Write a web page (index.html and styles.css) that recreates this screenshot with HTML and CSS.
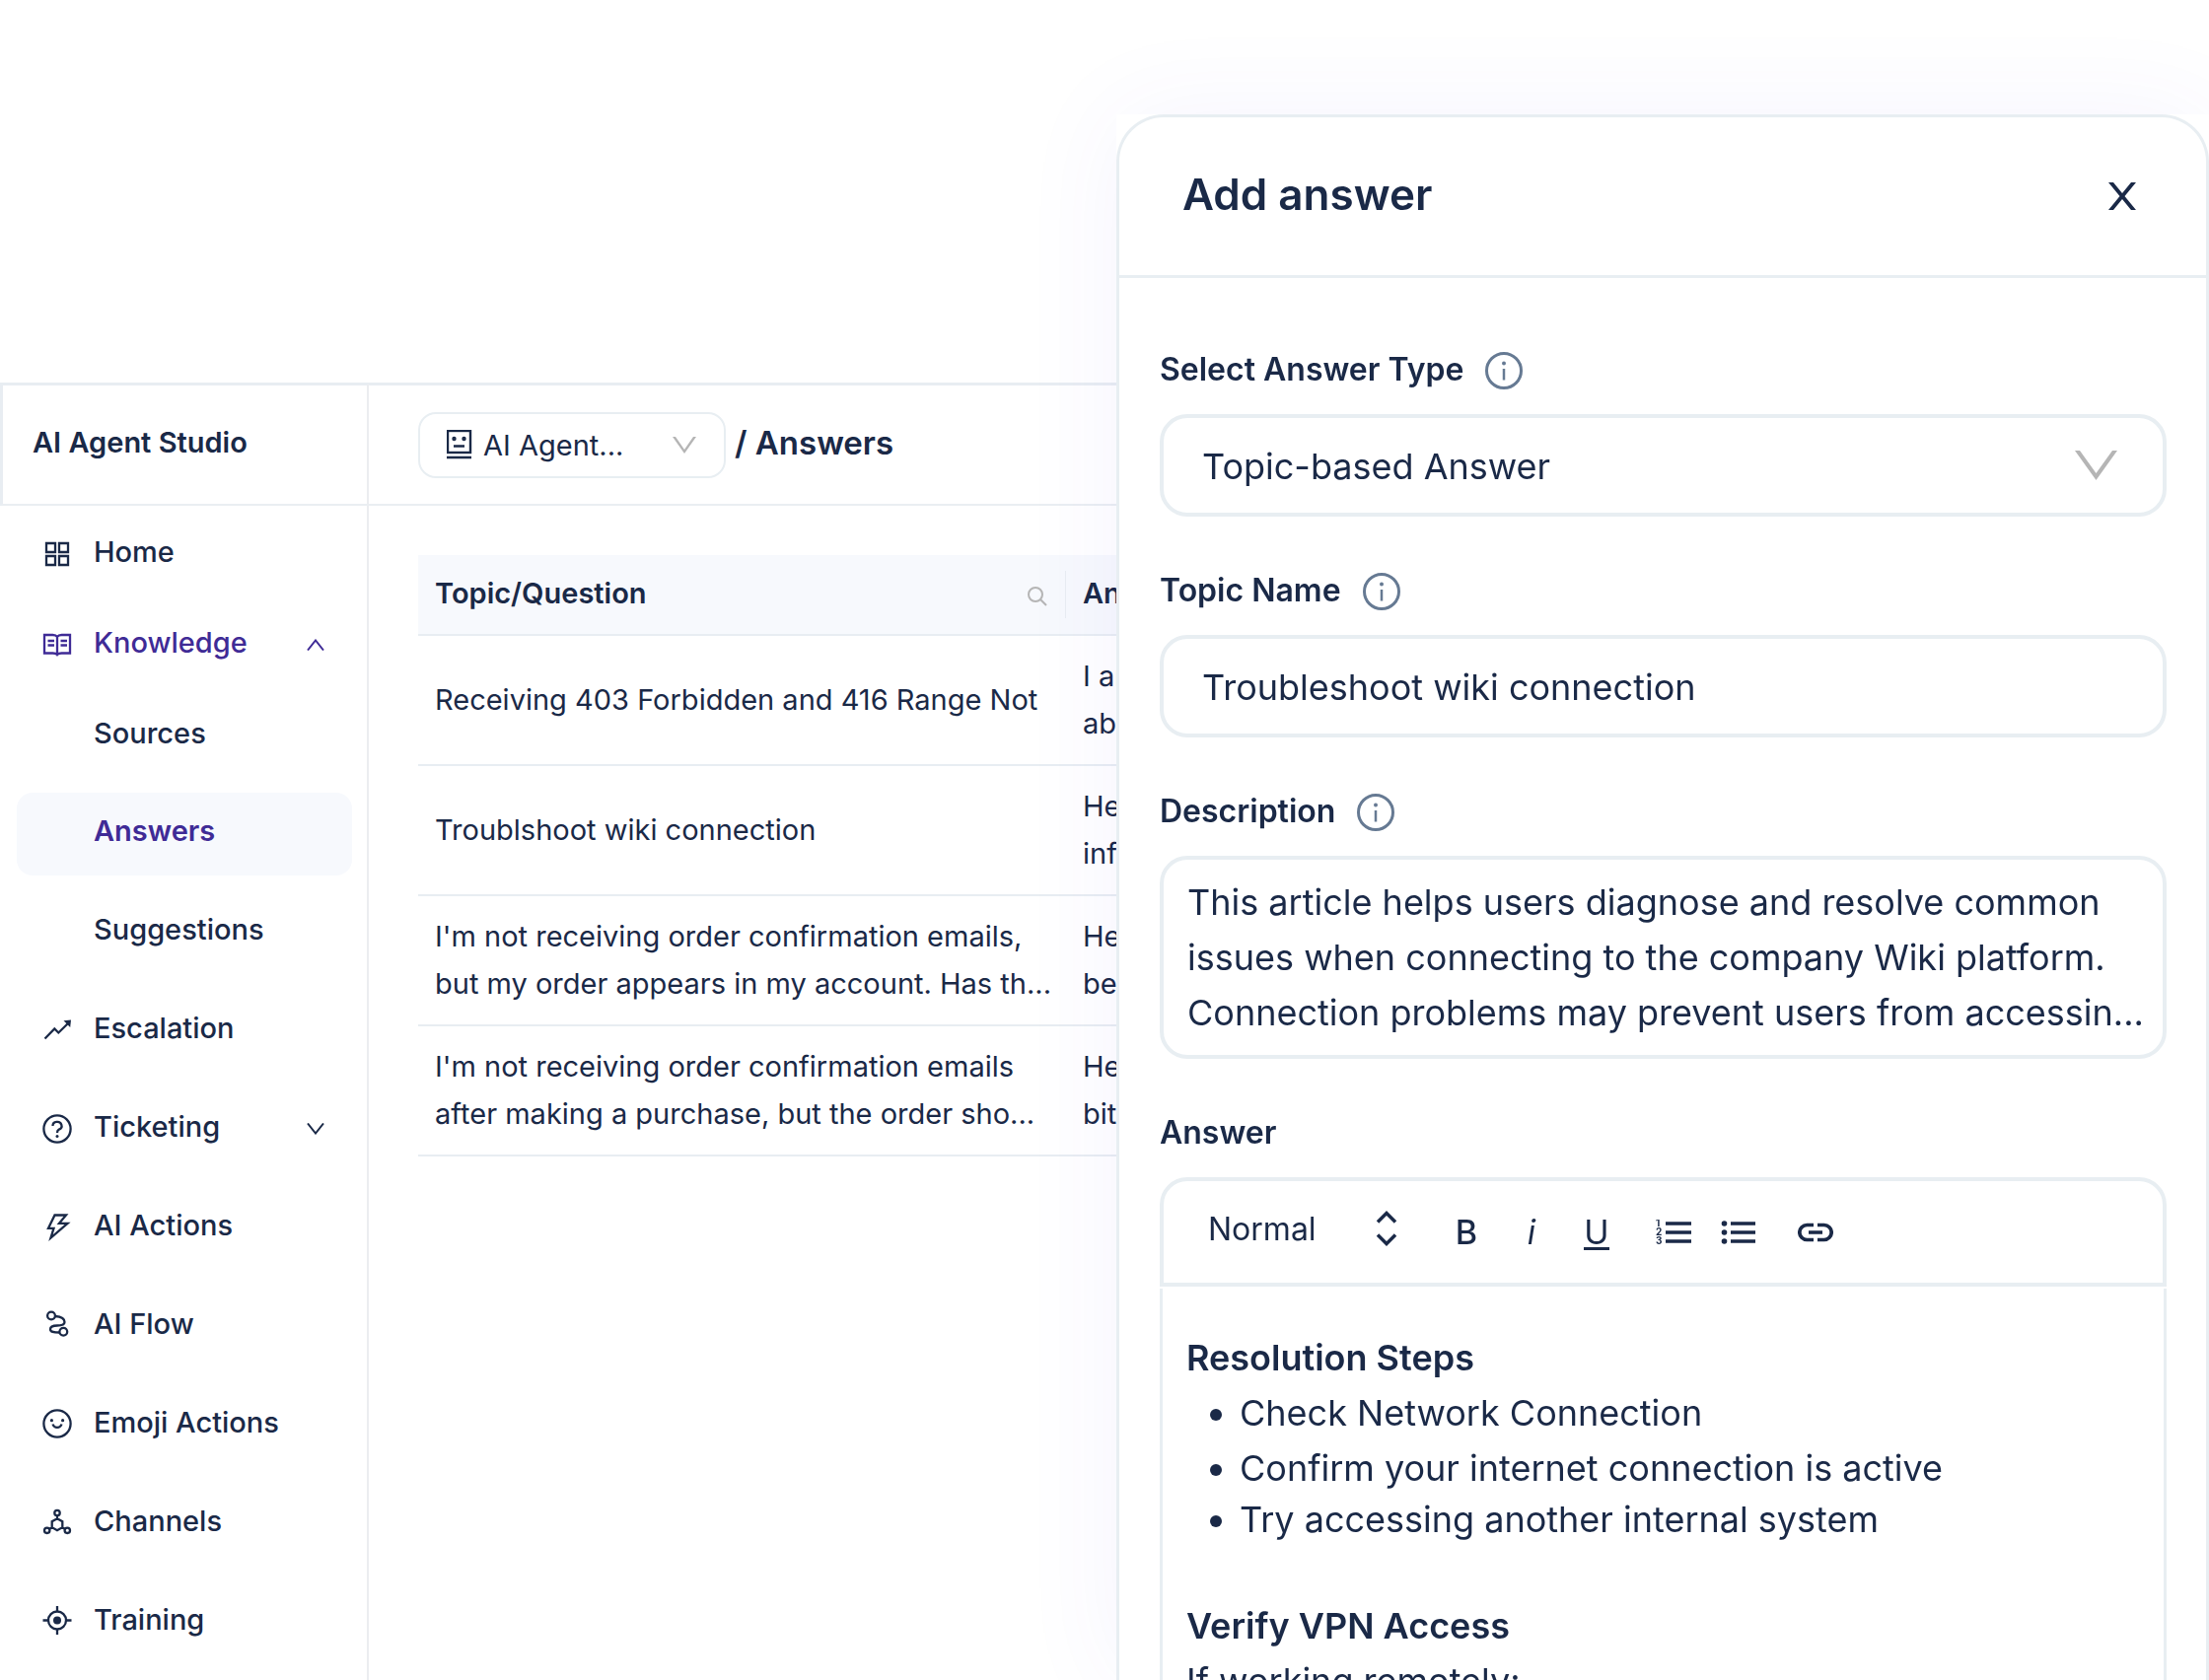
FILE: index.html
```html
<!DOCTYPE html>
<html lang="en">
  <head>
    <meta charset="UTF-8" />
    <meta name="viewport" content="width=device-width, initial-scale=1.0" />
    <title>AI Agent Studio</title>
    <link rel="stylesheet" href="styles.css">
  </head>
  <body>
    <div class="studio">
      <h1 class="brand">AI Agent Studio</h1>

      <header class="topbar">
        <div class="agent-picker">
          <svg class="agent-icon" viewBox="0 0 26 30">
            <rect x="1" y="1" width="23" height="22" />
            <path d="M7 16.500h11M0 28h25" />
            <circle cx="7.500" cy="9" r="1" />
            <circle cx="17.500" cy="9" r="1" />
          </svg>
          <select class="agent-select" aria-label="Agent">
            <option>AI Agent...</option>
          </select>
          <svg class="agent-arrow" viewBox="0 0 24 17"><path d="M0 0h3l9 13 9-13h3L12 17z" /></svg>
        </div>
        <h2 class="crumb"><span>/</span> Answers</h2>
      </header>

      <nav class="sidebar">
        <div class="nav-group">
          <a class="nav-item" href="#">
            <svg class="nav-icon" viewBox="0 0 30 30">
              <path d="M4 4h9v9H4zM17 4h9v9h-9zM4 17h9v9H4zM17 17h9v9h-9z" />
            </svg>
            <span>Home</span>
          </a>
          <a class="nav-item open" href="#">
            <svg class="nav-icon" viewBox="0 0 30 30">
              <path d="M2 5h8.500c2 0 3.700.7 4.500 2c.8-1.300 2.500-2 4.500-2H28v18.500h-8.500c-2 0-3.700.6-4.500 1.600c-.8-1-2.500-1.600-4.500-1.600H2zM15 7v18M5.500 11h6.500M5.500 15.500h6.500M18.500 11h6.500M18.500 15.500h6.500" />
            </svg>
            <span>Knowledge</span>
            <svg class="nav-arrow" viewBox="0 0 18 12"><path d="M1 11.500L9 1.500L17 11.500" /></svg>
          </a>
          <a class="nav-item sub" href="#"><span>Sources</span></a>
        </div>
        <div class="nav-group wide">
          <a class="nav-item sub active" href="#"><span>Answers</span></a>
          <a class="nav-item sub" href="#"><span>Suggestions</span></a>
          <a class="nav-item" href="#">
            <svg class="nav-icon" viewBox="0 -1 30 30">
              <path d="M2.500 22.500L12.300 12.500L16.300 16.500L26 7" />
              <path class="solid" d="M21.500 4.300L29 3.500L28.200 11z" />
            </svg>
            <span>Escalation</span>
          </a>
          <a class="nav-item" href="#">
            <svg class="nav-icon" viewBox="0 0 30 30">
              <circle cx="15" cy="15" r="13.600" />
              <path d="M10.500 12a4.500 4 0 1 1 6.300 3.600c-1.300.7-1.800 1.400-1.800 3.400" />
              <circle class="dot" cx="15" cy="22.500" r="1.500" />
            </svg>
            <span>Ticketing</span>
            <svg class="nav-arrow" viewBox="0 0 18 12"><path d="M1 .5L9 10.500L17 .5" /></svg>
          </a>
          <a class="nav-item" href="#">
            <svg class="nav-icon" viewBox="0 -1 30 30">
              <path d="M12.500 1.500H24L17 9.800H25.500L8.500 24.500L11.500 14.800H6z" />
            </svg>
            <span>AI Actions</span>
          </a>
          <a class="nav-item" href="#">
            <svg class="nav-icon" viewBox="0 0 30 30">
              <circle cx="9" cy="4.500" r="3.900" />
              <circle cx="21.300" cy="20.800" r="3.900" />
              <path d="M13 5C19 5.500 22.500 8 22.500 11S19.500 14.500 15 14.500S8 15.500 8 18.300S11 21.500 17.300 21.500" />
            </svg>
            <span>AI Flow</span>
          </a>
          <a class="nav-item" href="#">
            <svg class="nav-icon" viewBox="0 0 30 30">
              <circle cx="15" cy="14" r="13.600" />
              <circle class="dot" cx="9.400" cy="10.700" r="1.600" />
              <circle class="dot" cx="20.600" cy="10.700" r="1.600" />
              <path d="M10.500 14.500a4.700 4.700 0 0 0 9 0" />
            </svg>
            <span>Emoji Actions</span>
          </a>
          <a class="nav-item" href="#">
            <svg class="nav-icon" viewBox="0 -1 30 30">
              <path d="M15 9.200L20.300 12.200V18.200L15 21.200L9.700 18.200V12.200zM15 6.500V9M9.700 18.200L7.200 19.700M20.300 18.200L22.800 19.700" />
              <circle cx="15" cy="3.500" r="2.700" />
              <circle cx="4.700" cy="21.300" r="2.700" />
              <circle cx="25.300" cy="21.300" r="2.700" />
            </svg>
            <span>Channels</span>
          </a>
          <a class="nav-item" href="#">
            <svg class="nav-icon" viewBox="0 0 30 30">
              <circle cx="15" cy="13.500" r="9" />
              <circle class="dot" cx="15" cy="13.500" r="4" />
              <path d="M15 -1V4.500M15 22.500V28M.5 13.500H6M24 13.500H29.500" />
            </svg>
            <span>Training</span>
          </a>
        </div>
      </nav>

      <main class="content">
        <table class="answers">
          <thead>
            <tr>
              <th class="topic">
                <div class="th-inner">
                  Topic/Question
                  <svg class="search-icon" viewBox="0 0 20 20">
                    <circle cx="8" cy="8" r="7" />
                    <path d="M13 13L19 19" />
                  </svg>
                </div>
              </th>
              <th><div class="th-inner">Answer</div></th>
            </tr>
          </thead>
          <tbody>
            <tr>
              <td>Receiving 403 Forbidden and 416 Range Not</td>
              <td>I am<br>about</td>
            </tr>
            <tr>
              <td>Troublshoot wiki connection</td>
              <td>Here<br>info</td>
            </tr>
            <tr>
              <td>I'm not receiving order confirmation emails,<br>but my order appears in my account. Has th...</td>
              <td>Hello<br>been</td>
            </tr>
            <tr>
              <td>I'm not receiving order confirmation emails<br>after making a purchase, but the order sho...</td>
              <td>Hello<br>bit</td>
            </tr>
          </tbody>
        </table>
      </main>
    </div>

    <aside class="drawer">
      <div class="drawer-inner">
        <div class="drawer-head">
          <h2>Add answer</h2>
          <button class="close" aria-label="Close">
            <svg viewBox="0 0 28 28"><path d="M0 0h5L14 11 23 0h5L16.500 14 28 28h-5L14 17 5 28H0l11.500-14z" /></svg>
          </button>
        </div>

        <form class="drawer-body">
          <div class="field">
            <div class="label-row">
              <label for="type">Select Answer Type</label>
              <svg class="info" viewBox="0 0 38 38"><circle cx="19" cy="19" r="17.500" /><path d="M19 17V28.500" /><circle class="dot" cx="19" cy="11.500" r="2" /></svg>
            </div>
            <div class="select-wrap">
              <select id="type" class="box"><option>Topic-based Answer</option></select>
              <svg class="select-arrow" viewBox="0 0 43 30"><path d="M0 0h5l16.500 23L38 0h5L21.500 30z" /></svg>
            </div>
          </div>

          <div class="field">
            <div class="label-row">
              <label for="topic">Topic Name</label>
              <svg class="info" viewBox="0 0 38 38"><circle cx="19" cy="19" r="17.500" /><path d="M19 17V28.500" /><circle class="dot" cx="19" cy="11.500" r="2" /></svg>
            </div>
            <input id="topic" class="box" type="text" value="Troubleshoot wiki connection" />
          </div>

          <div class="field">
            <div class="label-row">
              <label for="desc">Description</label>
              <svg class="info" viewBox="0 0 38 38"><circle cx="19" cy="19" r="17.500" /><path d="M19 17V28.500" /><circle class="dot" cx="19" cy="11.500" r="2" /></svg>
            </div>
            <textarea id="desc" class="box area" rows="3">This article helps users diagnose and resolve common
issues when connecting to the company Wiki platform.
Connection problems may prevent users from accessin...</textarea>
          </div>

          <div class="field editor-field">
            <div class="label-row">
              <span id="answer-label">Answer</span>
            </div>
            <div class="toolbar">
              <div class="format">
                <select aria-label="Text style"><option>Normal</option></select>
                <svg class="updown" viewBox="0 0 22 36"><path d="M2 11.500L11 2.500L20 11.500M2 24.500L11 33.500L20 24.500" /></svg>
              </div>
              <div class="tool-group">
                <button type="button" class="tool bold">B</button>
                <button type="button" class="tool italic">i</button>
                <button type="button" class="tool"><span class="under">U</span></button>
              </div>
              <div class="tool-group">
                <button type="button" class="tool" aria-label="Numbered list">
                  <svg viewBox="0 0 36 26">
                    <path d="M10 4H36M10 13H36M10 22H36" />
                    <text x="0" y="7">1</text>
                    <text x="0" y="16">2</text>
                    <text x="0" y="25">3</text>
                  </svg>
                </button>
                <button type="button" class="tool" aria-label="Bulleted list">
                  <svg viewBox="0 0 36 26">
                    <path d="M10 4H35M10 13H35M10 22H35" />
                    <circle cx="3.500" cy="4" r="2.800" />
                    <circle cx="3.500" cy="13" r="2.800" />
                    <circle cx="3.500" cy="22" r="2.800" />
                  </svg>
                </button>
              </div>
              <div class="tool-group">
                <button type="button" class="tool" aria-label="Link">
                  <svg viewBox="0 0 36 26"><path d="M16 5.500H9.300a7.500 7.500 0 0 0 0 15H16M20 5.500H26.700a7.500 7.500 0 0 1 0 15H20M11 13H25" /></svg>
                </button>
              </div>
            </div>
            <div class="editor" contenteditable="true" role="textbox" aria-labelledby="answer-label">
              <h3>Resolution Steps</h3>
              <ul>
                <li>Check Network Connection</li>
                <li>Confirm your internet connection is active</li>
                <li>Try accessing another internal system</li>
              </ul>
              <h3>Verify VPN Access</h3>
              <p>If working remotely:</p>
            </div>
          </div>
        </form>
      </div>
    </aside>
  </body>
</html>
```
FILE: styles.css
```css
* {
  box-sizing: border-box;
}

body {
  margin: 0;
  height: 100vh;
  overflow: hidden;
  background: #fff;
  color: #1a2947;
  font-family: Inter, "Liberation Sans", sans-serif;
  font-size: 29px;
}

h1,
h2,
h3,
p,
ul {
  margin: 0;
}

button,
input,
select,
textarea {
  margin: 0;
  border: none;
  background: none;
  color: inherit;
  font: inherit;
  outline: none;
}

select {
  appearance: none;
  cursor: pointer;
}

button {
  padding: 0;
  cursor: pointer;
}

svg {
  display: block;
  flex: none;
}

/* studio */
.studio {
  display: grid;
  grid-template-columns: 374px 1fr;
  grid-template-rows: 125px 1fr;
  height: 100%;
  padding-top: 388px;
}

.brand,
.topbar {
  display: flex;
  align-items: center;
  border-top: 3px solid #e8edf2;
  border-bottom: 2px solid #eaeef2;
}

.brand {
  padding: 0 0 6px 30px;
  border-left: 3px solid #e8edf2;
  border-right: 2px solid #ebedf0;
  font-size: 29px;
  font-weight: 600;
}

.topbar {
  padding-left: 50px;
}

.agent-picker {
  position: relative;
  display: flex;
  align-items: center;
  width: 312px;
  height: 67px;
  padding-left: 27px;
  border: 2px solid #e8eef2;
  border-radius: 18px;
}

.agent-icon {
  width: 26px;
  height: 30px;
  fill: none;
  stroke: #1a2947;
  stroke-width: 2.4;
}

.agent-select {
  flex: 1;
  height: 100%;
  padding: 0 0 0 11px;
}

.agent-arrow {
  position: absolute;
  right: 28px;
  top: 23px;
  width: 24px;
  height: 17px;
  fill: #b5b5b5;
  pointer-events: none;
}

.crumb {
  padding: 0 0 5px 9px;
  font-size: 33px;
  font-weight: 600;
}

/* sidebar */
.sidebar {
  padding: 8px 15px 0 17px;
  border-right: 2px solid #ebedf0;
}

.nav-group {
  display: flex;
  flex-direction: column;
  gap: 8px;
  margin-bottom: 15px;
}

.nav-group.wide {
  gap: 16px;
}

.nav-item {
  display: flex;
  align-items: center;
  gap: 22px;
  height: 84px;
  padding: 0 28px 2px 26px;
  border-radius: 16px;
  color: #1a2947;
  font-weight: 500;
  text-decoration: none;
}

.nav-item span {
  padding-bottom: 5px;
}

.nav-item.sub {
  padding-left: 78px;
}

.nav-item.open,
.nav-item.active {
  color: #3f2b96;
}

.nav-item.active {
  background: #f7f9fd;
  font-weight: 600;
}

.nav-icon {
  width: 30px;
  height: 30px;
  fill: none;
  stroke: currentColor;
  stroke-width: 2.3;
  overflow: visible;
}

.nav-icon .dot,
.nav-icon .solid {
  fill: currentColor;
  stroke: none;
}

.nav-arrow {
  width: 18px;
  height: 12px;
  margin-left: auto;
  fill: none;
  stroke: currentColor;
  stroke-width: 2;
}

/* table */
.content {
  padding: 50px 0 0 50px;
}

.answers {
  width: 100%;
  border-collapse: separate;
  border-spacing: 0;
  table-layout: fixed;
}

.answers th,
.answers td {
  padding: 17px 0 17px 17px;
  border-bottom: 2px solid #e8edf2;
  line-height: 48px;
  text-align: left;
  white-space: nowrap;
}

.answers th {
  padding: 16px 0;
  background: #f7f9fd;
  font-weight: 600;
}

.answers .topic {
  width: 657px;
}

.th-inner {
  display: flex;
  align-items: center;
  justify-content: space-between;
  height: 48px;
  padding: 0 18px 3px 17px;
}

.topic .th-inner {
  border-right: 1px solid #e9edf2;
}

.search-icon {
  width: 20px;
  height: 20px;
  margin-top: 6px;
  fill: none;
  stroke: #b5b5b5;
  stroke-width: 2;
}

/* drawer */
.drawer {
  position: fixed;
  top: 116px;
  right: 0;
  bottom: 0;
  width: calc(50% - 12px);
  background: #fff;
  box-shadow: 0 0 100px rgba(80, 70, 230, 0.06);
}

.drawer-inner {
  display: flex;
  flex-direction: column;
  height: 100%;
  border: 3px solid #e8eef2;
  border-bottom: none;
  border-radius: 48px 48px 0 0;
  overflow: hidden;
}

.drawer-head {
  flex: none;
  display: flex;
  align-items: center;
  justify-content: space-between;
  height: 163px;
  padding: 0 71px 0 64px;
  border-bottom: 3px solid #e8eef2;
}

.drawer-head h2 {
  padding-bottom: 5px;
  font-size: 44px;
  font-weight: 600;
}

.close svg {
  width: 28px;
  height: 28px;
  fill: #1a2947;
}

.drawer-body {
  flex: 1;
  display: flex;
  flex-direction: column;
  gap: 54px;
  min-height: 0;
  padding: 72px 40px 0 41px;
}

.label-row {
  display: flex;
  align-items: center;
  gap: 22px;
  height: 40px;
  margin-bottom: 26px;
  font-size: 32px;
  font-weight: 600;
}

.info {
  width: 38px;
  height: 38px;
  margin-top: 3px;
  fill: none;
  stroke: #667a93;
  stroke-width: 3;
}

.info path {
  stroke-width: 2.5;
}

.info .dot {
  fill: #667a93;
  stroke: none;
}

.select-wrap {
  position: relative;
}

.box {
  display: block;
  width: 100%;
  height: 104px;
  padding: 2px 39px 0;
  border: 4px solid #e8eef2;
  border-radius: 28px;
  font-size: 36px;
}

.area {
  height: 206px;
  padding: 15px 0 15px 24px;
  line-height: 56px;
  resize: none;
  overflow: hidden;
}

.select-arrow {
  position: absolute;
  right: 50px;
  top: 37px;
  width: 43px;
  height: 30px;
  fill: #b5b5b5;
  pointer-events: none;
}

.editor-field {
  flex: 1;
  display: flex;
  flex-direction: column;
  min-height: 0;
}

.toolbar {
  flex: none;
  display: flex;
  align-items: center;
  gap: 34px;
  height: 111px;
  padding-left: 45px;
  border: 4px solid #e8eef2;
  border-radius: 28px 28px 0 0;
}

.format {
  position: relative;
  width: 206px;
  font-size: 32px;
}

.format select {
  width: 100%;
  padding: 0 0 6px;
}

.updown {
  position: absolute;
  right: 14px;
  top: 1px;
  width: 22px;
  height: 36px;
  fill: none;
  stroke: #1a2947;
  stroke-width: 3.5;
  pointer-events: none;
}

.tool-group {
  display: flex;
  gap: 22px;
}

.tool {
  display: flex;
  align-items: center;
  justify-content: center;
  width: 44px;
  height: 44px;
  font-size: 34px;
}

.tool.bold {
  font-weight: 500;
}

.tool.italic {
  font-style: italic;
}

.under {
  height: 36px;
  border-bottom: 3px solid #1a2947;
  line-height: 36px;
}

.tool svg {
  width: 36px;
  height: 26px;
  fill: none;
  stroke: #1a2947;
  stroke-width: 3.7;
}

.tool circle,
.tool text {
  fill: #1a2947;
  stroke: none;
  font-size: 10px;
  font-weight: 700;
}

.editor {
  flex: 1;
  min-height: 0;
  margin-top: 2px;
  padding: 42px 24px 0;
  border: 3px solid #e8eef2;
  border-width: 0 3px;
  font-size: 36px;
  line-height: 56px;
  outline: none;
  overflow: hidden;
}

.editor h3 {
  font-size: 36px;
  font-weight: 600;
}

.editor ul {
  margin-bottom: 56px;
  padding-left: 54px;
}

.editor li:last-child {
  line-height: 48px;
}
```
